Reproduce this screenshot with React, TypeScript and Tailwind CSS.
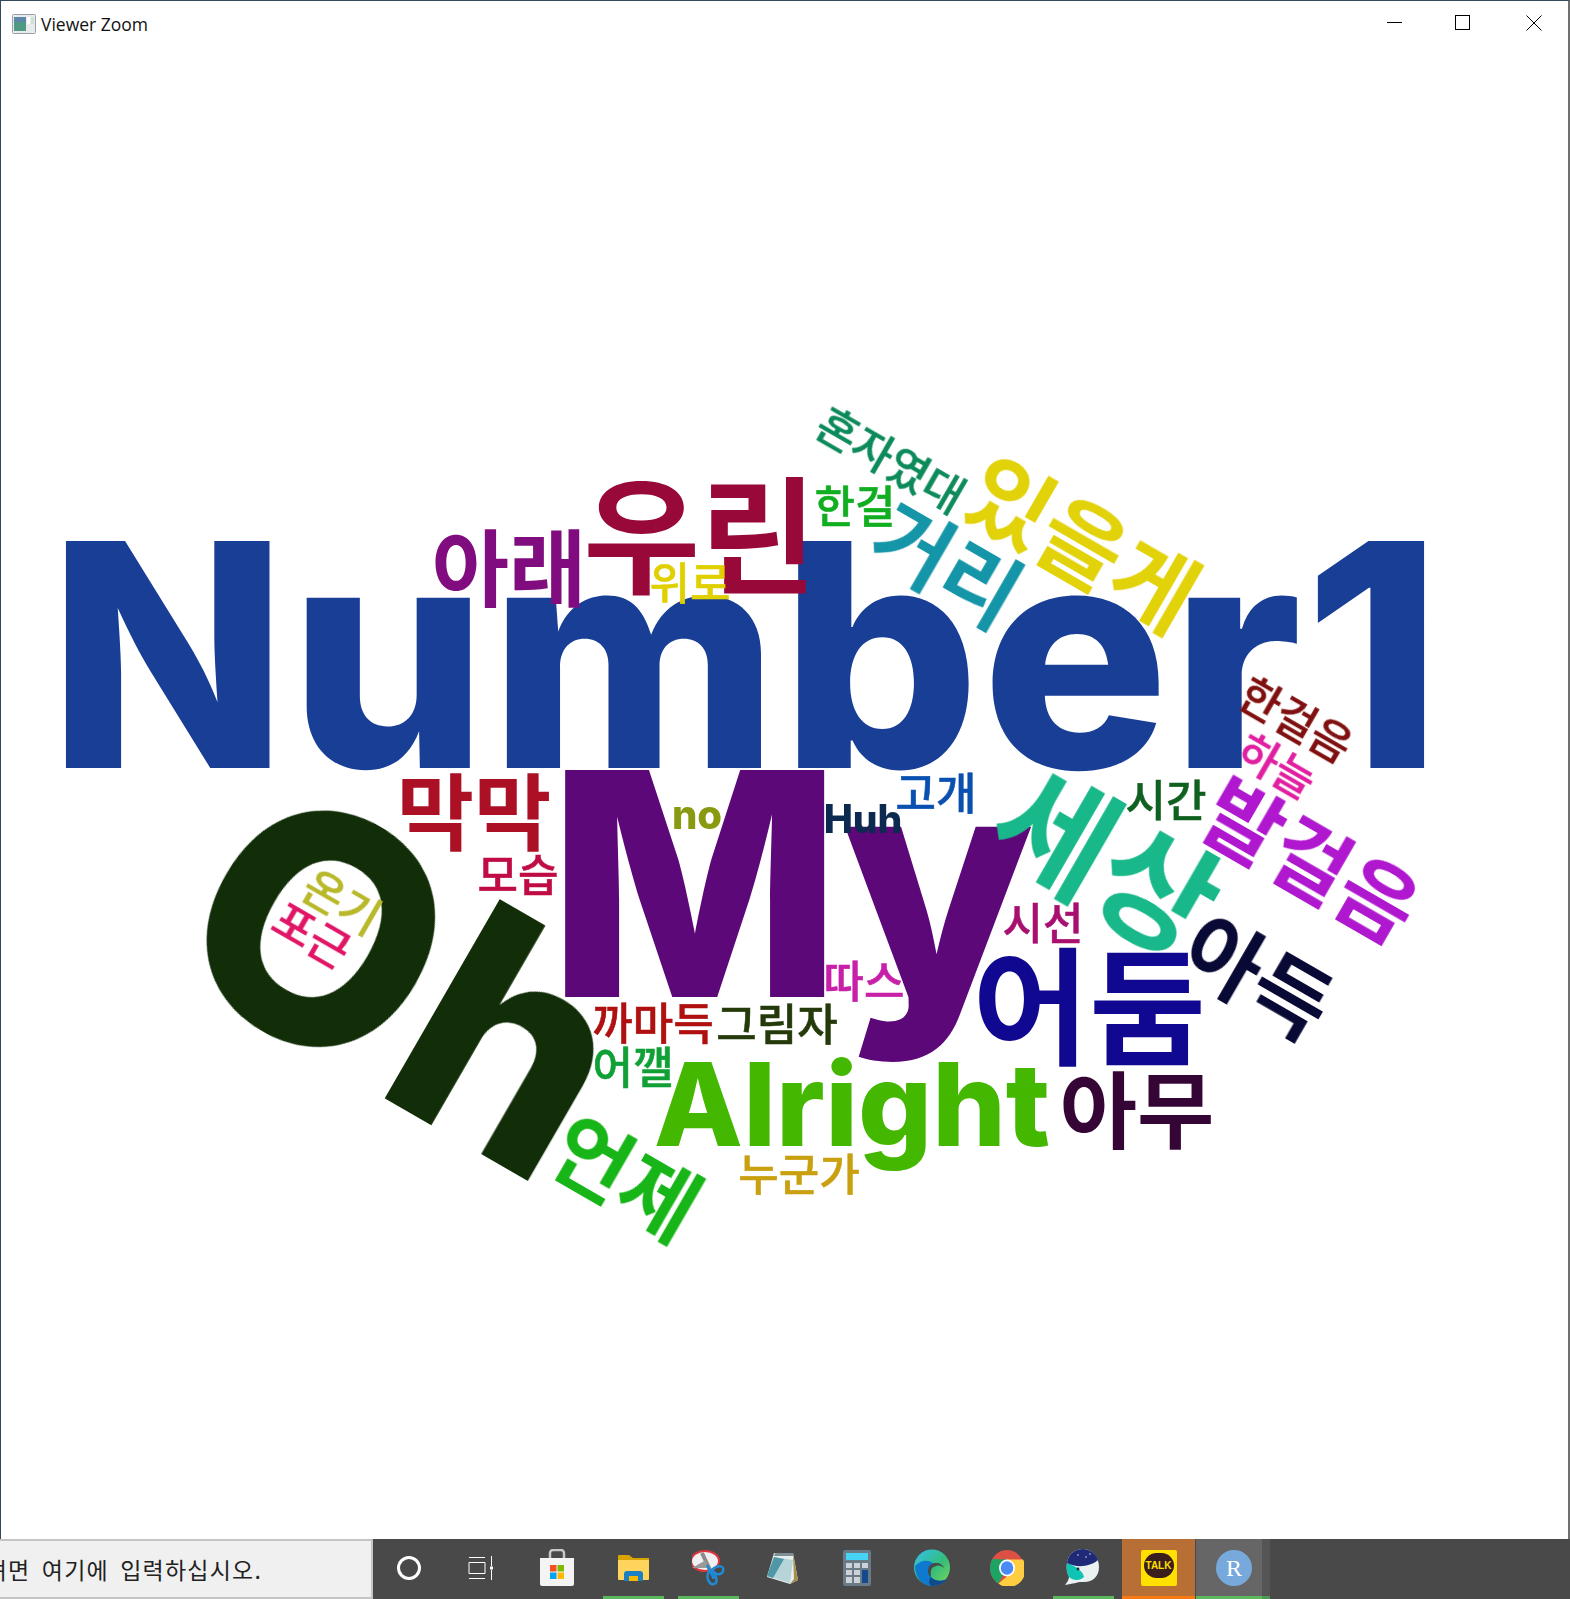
const cjk = "font-['Noto_Sans_CJK_KR',sans-serif] font-bold leading-none"
const cjkSm = "font-['Noto_Sans_CJK_KR',sans-serif] font-medium [-webkit-text-stroke:0.5px] leading-none"
const latin = "font-['Inter',sans-serif] font-extrabold leading-none"

// word cloud: each word's place on the canvas is the content itself
const words = [
  { t: "Number1", c: `${latin} left-[745px] top-[609px] text-[312px] tracking-[2px] text-[#183e96]` },
  { t: "우린", c: `${cjk} left-[699px] top-[483px] text-[127px] text-[#980838]` },
  { t: "아래", c: `${cjk} left-[508px] top-[518px] text-[84px] text-[#800c80]` },
  { t: "위로", c: `${cjkSm} left-[689px] top-[535px] text-[44px] text-[#e0d000]` },
  { t: "한걸", c: `${cjkSm} left-[854px] top-[458px] text-[44px] text-[#10ae20]` },
  { t: "혼자였대", c: `${cjkSm} left-[891px] top-[412px] text-[44px] rotate-[30deg] text-[#0c8a5a]` },
  { t: "거리", c: `${cjk} left-[948px] top-[515px] text-[84px] rotate-[30deg] text-[#1595a8]` },
  { t: "있을게", c: `${cjk} left-[1084px] top-[493px] text-[90px] rotate-[30deg] text-[#e2d20a]` },
  { t: "한걸음", c: `${cjkSm} left-[1296px] top-[672px] text-[44px] rotate-[30deg] text-[#801010]` },
  { t: "하늘", c: `${cjkSm} left-[1277px] top-[718px] text-[44px] rotate-[30deg] text-[#e020a0]` },
  { t: "막막", c: `${cjk} left-[473px] top-[762px] text-[84px] text-[#ac1025]` },
  { t: "모습", c: `${cjkSm} left-[517px] top-[827px] text-[44px] text-[#c00c45]` },
  { t: "My", c: `${latin} left-[788px] top-[838px] text-[312px] tracking-[-4px] text-[#5c0878]` },
  { t: "no", c: `${latin} left-[696px] top-[769px] text-[40px] text-[#8a9a10]` },
  { t: "Huh", c: `${latin} left-[862px] top-[772px] text-[39px] text-[#0c2a50]` },
  { t: "고개", c: `${cjkSm} left-[935px] top-[745px] text-[44px] text-[#0a50b0]` },
  { t: "시간", c: `${cjkSm} left-[1165px] top-[752px] text-[44px] text-[#106020]` },
  { t: "세상", c: `${cjk} left-[1109px] top-[809px] text-[127px] rotate-[30deg] text-[#18b88a]` },
  { t: "발걸음", c: `${cjk} left-[1312px] top-[811px] text-[84px] rotate-[30deg] text-[#b018d0]` },
  { t: "아득", c: `${cjk} left-[1259px] top-[927px] text-[84px] rotate-[30deg] text-[#080a35]` },
  { t: "어둠", c: `${cjk} left-[1088px] top-[954px] text-[127px] text-[#100890]` },
  { t: "시선", c: `${cjkSm} left-[1042px] top-[875px] text-[44px] text-[#a81070]` },
  { t: "따스", c: `${cjkSm} left-[863px] top-[933px] text-[44px] text-[#c820a8]` },
  { t: "Oh", c: `${latin} left-[407px] top-[933px] text-[316px] rotate-[30deg] text-[#112e08]` },
  { t: "온기", c: `${cjkSm} left-[342px] top-[854px] text-[44px] rotate-[30deg] text-[#b8b82a]` },
  { t: "포근", c: `${cjkSm} left-[312px] top-[887px] text-[44px] rotate-[30deg] text-[#e01565]` },
  { t: "까마득", c: `${cjkSm} left-[652px] top-[975px] text-[44px] text-[#b01010]` },
  { t: "그림자", c: `${cjkSm} left-[776px] top-[976px] text-[44px] text-[#253a0a]` },
  { t: "어깰", c: `${cjkSm} left-[632px] top-[1019px] text-[44px] text-[#10a035]` },
  { t: "Alright", c: `${latin} left-[851px] top-[1058px] text-[116px] text-[#44b800]` },
  { t: "언제", c: `${cjk} left-[627px] top-[1128px] text-[84px] rotate-[30deg] text-[#18b518]` },
  { t: "누군가", c: `${cjkSm} left-[798px] top-[1126px] text-[44px] text-[#c8a010]` },
  { t: "아무", c: `${cjk} left-[1136px] top-[1060px] text-[84px] text-[#340535]` },
]

function TaskItem({ children, on }: { children: React.ReactNode; on?: boolean }) {
  return (
    <div className={`w-[61px] mx-[7px] h-full flex items-center justify-center border-b-[3px] ${on ? "border-[#5cb85c]" : "border-transparent"}`}>
      {children}
    </div>
  )
}

function App() {
  return (
    <div className="w-[1570px] h-[1599px] flex flex-col bg-white overflow-hidden">
      <header className="h-[46px] shrink-0 flex items-center justify-between border-t border-t-[#33495a] border-l border-l-[#33495a] border-r-2 border-r-[#707070]">
        <div className="flex items-center gap-[5px] pl-[11px]">
          <svg width="24" height="20" viewBox="0 0 24 20">
            <rect x="0.5" y="0.5" width="23" height="19" rx="1" fill="#e8eaec" stroke="#9aa0a6" />
            <rect x="2" y="3" width="12" height="14" fill="#4f9a84" />
            <rect x="2" y="3" width="12" height="5" fill="#5b86a8" />
            <rect x="15" y="3" width="3" height="7" fill="#ffffff" />
            <rect x="19" y="3" width="3" height="7" fill="#cfe0d8" />
          </svg>
          <span className="font-['Open_Sans',sans-serif] text-[17.5px] text-[#111] mt-[2px]">Viewer Zoom</span>
        </div>
        <div className="flex items-center pr-[26px] pb-[2px] text-black">
          <div className="w-[15px] h-px bg-black mr-[53px]" />
          <div className="w-[15px] h-[15px] border-[1.5px] border-black mr-[56px]" />
          <svg width="16" height="16" viewBox="0 0 16 16" stroke="black" strokeWidth="1">
            <path d="M0.5 0.5L15.5 15.5M15.5 0.5L0.5 15.5" />
          </svg>
        </div>
      </header>

      <main className="relative flex-1 border-l border-l-[#33495a] border-r-2 border-r-[#707070] overflow-hidden">
        {words.map((w) => (
          <span key={w.t} className={`absolute -translate-x-1/2 -translate-y-1/2 whitespace-nowrap blur-[0.4px] ${w.c}`}>
            {w.t}
          </span>
        ))}
      </main>

      <footer className="h-[60px] shrink-0 flex bg-[#494949]">
        <div className="w-[373px] h-full shrink-0 flex items-center justify-end overflow-hidden bg-[#f0f0f0] border-2 border-l-0 border-[#c4c4c4] pr-[109px]">
          <span className="font-['Noto_Sans_CJK_KR',sans-serif] text-[23px] tracking-[1.2px] [word-spacing:5px] text-[#222] whitespace-nowrap">검색하려면 여기에 입력하십시오.</span>
        </div>

        <div className="flex h-full -ml-[2px]">
          <TaskItem>
            <div className="w-[24px] h-[24px] rounded-full border-[3px] border-white" />
          </TaskItem>
          <TaskItem>
            <svg width="26" height="24" viewBox="0 0 26 24" fill="none" stroke="white" strokeWidth="1" className="-ml-[6px]">
              <path d="M1 1.5H17M1 6.5H17V17.5H1ZM1 22.5H17M23.5 0V10M23.5 14V24" />
              <rect x="22" y="10.5" width="3" height="3" fill="white" stroke="none" />
            </svg>
          </TaskItem>
          <TaskItem>
            <svg width="36" height="37" viewBox="0 0 36 37" className="-ml-[3px]">
              <path d="M11 9V4a3 3 0 0 1 3-3h8a3 3 0 0 1 3 3v5" fill="none" stroke="#c8c8c8" strokeWidth="2.5" />
              <path d="M1 9H35V35a2 2 0 0 1-2 2H3a2 2 0 0 1-2-2Z" fill="#f4f4f4" />
              <rect x="11" y="16" width="6.5" height="6.5" fill="#f25022" />
              <rect x="18.5" y="16" width="6.5" height="6.5" fill="#7fba00" />
              <rect x="11" y="23.5" width="6.5" height="6.5" fill="#00a4ef" />
              <rect x="18.5" y="23.5" width="6.5" height="6.5" fill="#ffb900" />
            </svg>
          </TaskItem>
          <TaskItem on>
            <svg width="33" height="27" viewBox="0 0 33 27">
              <path d="M1 2a1 1 0 0 1 1-1H12L16 4H32V8H1Z" fill="#d9a300" />
              <path d="M1 6H32V25a1 1 0 0 1-1 1H2a1 1 0 0 1-1-1Z" fill="#ffd45c" />
              <path d="M7 27V20a3 3 0 0 1 3-3H23a3 3 0 0 1 3 3V27H21V23H12V27Z" fill="#1b7fc4" />
              <rect x="12" y="22" width="9" height="5" fill="#f5b700" />
            </svg>
          </TaskItem>
          <TaskItem on>
            <svg width="34" height="36" viewBox="0 0 34 36">
              <ellipse cx="13" cy="11" rx="14" ry="10" fill="#f1f1f1" stroke="#d9363e" strokeWidth="2" />
              <path d="M10 3L18 20" stroke="#8a8a8a" strokeWidth="4" />
              <path d="M0 18L14 10L16 18Z" fill="#9a9a9a" />
              <path d="M15 15L22 29" stroke="#1f8ad6" strokeWidth="2.5" />
              <path d="M20 20C26 14 33 16 31 21C29 26 23 25 20 20Z" fill="none" stroke="#1f8ad6" strokeWidth="2.5" />
              <path d="M17 21C13 29 18 35 22 34C27 33 24 24 19 20" fill="none" stroke="#1f8ad6" strokeWidth="2.5" />
            </svg>
          </TaskItem>
          <TaskItem>
            <svg width="32" height="32" viewBox="0 0 32 32" className="-ml-[4px]">
              <path d="M8 1H27L32 28L24 32L1 25Z" fill="#e6efef" />
              <path d="M8 5L27 8L24 31L1 24Z" fill="#b7d5d8" />
              <path d="M8 5L18 7L7 26L1 24Z" fill="#4f97a6" />
              <path d="M27 2L32 28L24 32L28 27Z" fill="#a98b4a" />
              <path d="M9 1H27V4H8Z" fill="#7f8f94" />
            </svg>
          </TaskItem>
          <TaskItem>
            <div className="w-[28px] h-[36px] rounded-[2px] bg-[#6b7a87] p-[3px] flex flex-col gap-[3px] -ml-[3px]">
              <div className="h-[7px] bg-[#47d3f5]" />
              <div className="grid grid-cols-3 gap-[2px] flex-1">
                <div className="bg-[#ccd2d8]" />
                <div className="bg-[#ccd2d8]" />
                <div className="bg-[#ccd2d8]" />
                <div className="bg-[#ccd2d8]" />
                <div className="bg-[#ccd2d8]" />
                <div className="row-span-2 bg-[#134a8e]" />
                <div className="bg-[#ccd2d8]" />
                <div className="bg-[#ccd2d8]" />
              </div>
            </div>
          </TaskItem>
          <TaskItem>
            <svg width="36" height="37" viewBox="0 0 36 37" className="-ml-[3px]">
              <defs>
                <linearGradient id="edgeA" x1="0" y1="0" x2="1" y2="1">
                  <stop offset="0" stopColor="#35c1f1" />
                  <stop offset="0.55" stopColor="#33bc7c" />
                  <stop offset="1" stopColor="#7ed957" />
                </linearGradient>
              </defs>
              <circle cx="18" cy="18.5" r="18" fill="url(#edgeA)" />
              <path d="M1 17C1 30 10 37 18 37C24 37 30 34 33 30C27 33 20 32 17 28C14 24 16 18 22 17C18 11 8 9 1 17Z" fill="#0f79d0" />
              <path d="M17 28C20 32 27 33 33 30C30 34 24 37 18 37C15 37 14 31 17 28Z" fill="#114a8b" />
              <path d="M14 22C14 16 18 14 22 14C26 14 29 16 30 19C28 17 25 16 22 17C18 18 16 20 17 28C15 27 14 25 14 22Z" fill="#494949" />
            </svg>
          </TaskItem>
          <TaskItem>
            <svg width="34" height="36" viewBox="-17 -17 34 34" preserveAspectRatio="none" className="-ml-[3px]">
              <circle r="17" fill="#dd5044" />
              <path d="M0 0L-8.5 14.7A17 17 0 0 1 -14.7 -8.5L0 -8Z" fill="#1ea362" />
              <path d="M0 -8H16A17 17 0 0 1 -8.5 14.7L0 8Z" fill="#ffcd42" />
              <circle r="8" fill="white" />
              <circle r="6.3" fill="#4a8af4" />
            </svg>
          </TaskItem>
          <TaskItem on>
            <svg width="36" height="37" viewBox="0 0 36 37" className="-ml-[3px]">
              <path d="M3 14C4 5 11 0 19 0C28 0 35 8 35 18C35 28 28 34 18 33C13 33 9 35 1 36C3 33 5 31 5 28C3 24 2 19 3 14Z" fill="#e9f1f1" />
              <path d="M3 14C2 19 3 24 5 28C9 32 16 32 20 28C19 23 14 18 3 14Z" fill="#0fc4b4" />
              <path d="M3 14C4 5 11 0 19 0C26 0 32 5 34 11C26 18 12 19 3 14Z" fill="#1e2a78" />
              <circle cx="14" cy="20" r="1.4" fill="#0c2a3a" />
              <circle cx="14" cy="6" r="0.7" fill="#fff" />
              <circle cx="22" cy="8" r="0.7" fill="#fff" />
              <circle cx="26" cy="5" r="0.7" fill="#fff" />
            </svg>
          </TaskItem>
          <div className="w-[73px] mx-[1px] h-full flex items-center justify-center bg-[#b86f35] border-b-[3px] border-[#f97a12]">
            <div className="w-[36px] h-[36px] bg-[#ffe000] rounded-[2px] flex items-center justify-center">
              <div className="w-[30px] h-[25px] rounded-full bg-[#3a1d1d] flex items-center justify-center mb-[4px]">
                <span className="font-['Liberation_Sans',sans-serif] font-bold text-[10px] leading-none text-[#ffe000]">TALK</span>
              </div>
            </div>
          </div>
          <div className="w-[66px] h-full flex items-center justify-center bg-[#666666] border-b-[3px] border-[#5cb85c] pl-[10px]">
            <div className="w-[36px] h-[36px] rounded-full bg-[#78a9dc] flex items-center justify-center">
              <span className="font-['Liberation_Serif',serif] text-[24px] leading-none text-white">R</span>
            </div>
          </div>
          <div className="w-[8px] h-full bg-[#555555] border-b-[3px] border-[#4f9a52]" />
        </div>
      </footer>
    </div>
  )
}

export default App
